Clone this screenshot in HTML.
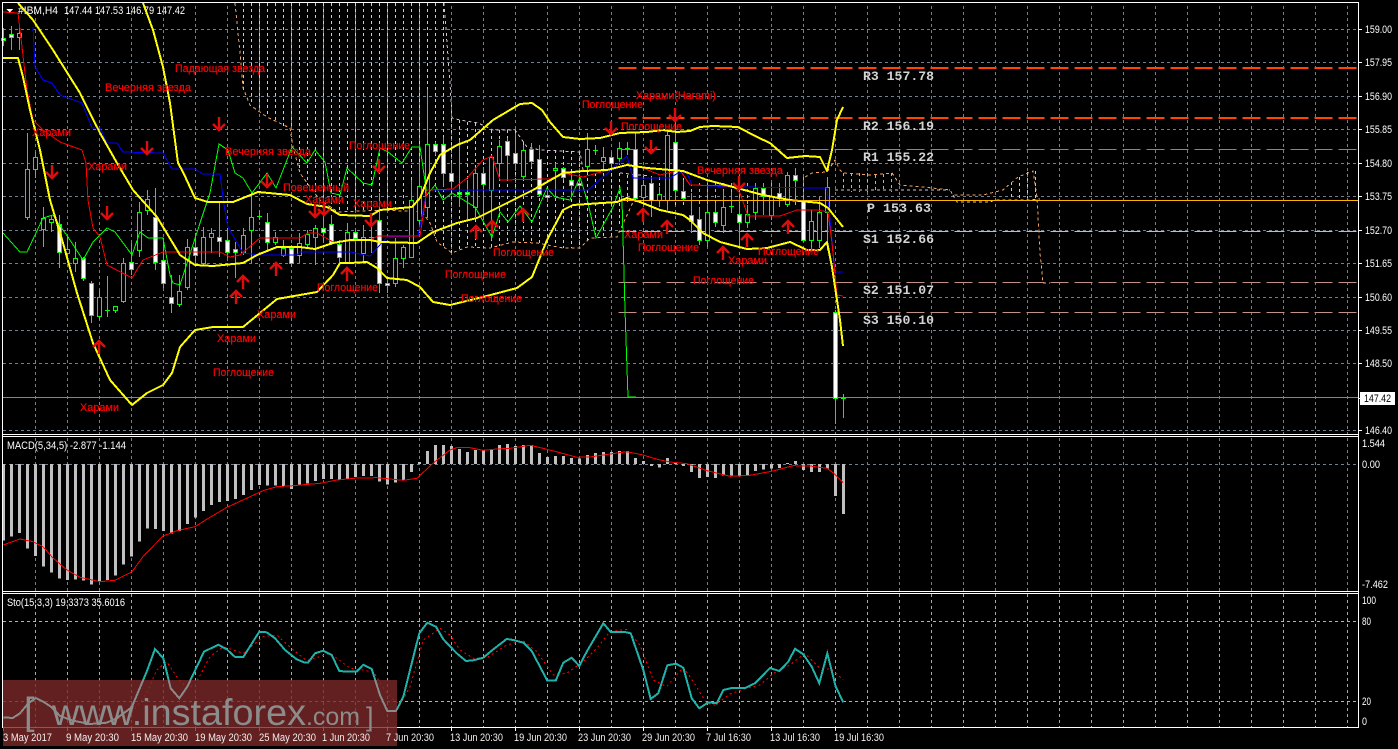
<!DOCTYPE html>
<html><head><meta charset="utf-8"><title>IBM,H4</title>
<style>
html,body{margin:0;padding:0;background:#000;width:1398px;height:749px;overflow:hidden}
svg{display:block}
text{font-family:"Liberation Sans",sans-serif;font-size:11px;fill:#fff}
.r text{font-size:11px;fill:#f00;stroke:#f00;stroke-width:.2px}
.m text{font-family:"Liberation Mono",monospace;font-size:13px;font-weight:bold;fill:#d4d4d4}
.t text{fill:#f4eeee}
.n{fill:none}
</style></head><body>
<svg xmlns="http://www.w3.org/2000/svg" width="1398" height="749" viewBox="0 0 1398 749" shape-rendering="crispEdges">
<defs>
<pattern id="gv" patternUnits="userSpaceOnUse" width="32" height="6"><rect x="3" y="0" width="1" height="3" fill="#708090"/></pattern>
<pattern id="gs" patternUnits="userSpaceOnUse" width="32" height="6"><rect x="3" y="0" width="1" height="3" fill="#a8a8a8"/></pattern>
<path id="da" class="n" stroke="#e00c0c" stroke-width="2.4" shape-rendering="geometricPrecision" d="M0 -7V6M-6 0L0 6L6 0"/>
<path id="ua" class="n" stroke="#e00c0c" stroke-width="2.4" shape-rendering="geometricPrecision" d="M0 7V-6M-6 0L0 -6L6 0"/>
<path id="sm" class="n" stroke-width="2" d="M3.3 717.3L12.7 718L20 713.3L28.3 703.3L36 698L43.3 701.7L51.7 707.3L60 716L73.3 720.7L90 724L106.7 722.7L116.7 718.3L131.7 707.3L146.7 671.7L155 649L163.3 658.3L170.7 688.3L179.3 698.3L187.3 686.7L204 651.7L218.3 644.7L226.7 649.3L235 657L243.3 657L259.3 631.7L266.7 632.3L275 638.3L285 650L296.7 659.3L304 662.3L308.3 662.3L315 653.3L323.3 650.7L331.7 655L339.3 671L348.3 671.7L356.7 671.7L363.3 664.7L371.7 669L380 695L387.3 711L396 711L403.3 696.7L419.3 633.3L427.3 622.7L436 626.7L443.3 639.3L456.7 653.3L466 661L473.3 660.3L483.3 657.7L493.3 649.3L506.7 639L513.3 640L523.3 642.7L531.7 651L540 666.7L547.3 680.7L555.7 680.7L563.3 662.7L571.7 657.7L579.3 666L586.7 651.7L603.3 623.3L610.7 632L625 632L630.7 633.3L643.3 670L650.7 699L658.3 693.3L667.3 665.3L676 663.7L683.3 667.7L691.7 698.3L699.3 708.3L708.3 702.3L716.7 703.3L723.3 690L731.7 688L745 688L755 683.3L770 668L779.3 671L788.3 661.7L795 648.7L803.3 654.3L811.7 666.7L819.3 683.3L827.3 653.3L835.7 686.7L843.3 702.3"/>
<clipPath id="wm"><rect x="3" y="680" width="394" height="66"/></clipPath>
</defs>
<rect width="1398" height="749" fill="#000"/>

<!-- main grid -->
<rect x="32" y="3" width="1320" height="431" fill="url(#gv)"/>
<g stroke="#708090" stroke-dasharray="3 3" class="n">
<path d="M3 29.5H1358M3 62.5H1358M3 96.5H1358M3 129.5H1358M3 163.5H1358M3 196.5H1358M3 230.5H1358M3 263.5H1358M3 297.5H1358M3 330.5H1358M3 363.5H1358M3 430.5H1358"/>
</g>

<!-- cloud -->
<path class="n" stroke="#d8c8c8" stroke-dasharray="3 3" d="M243.5 3V90M251.5 3V105M259.5 3V111M267.5 3V117M275.5 3V122M283.5 3V126M291.5 3V129M299.5 3V170M307.5 3V185M315.5 3V195M323.5 3V203M331.5 3V208M339.5 3V212M347.5 3V212M355.5 3V212M363.5 3V212M371.5 3V212M379.5 3V212M387.5 3V211M395.5 3V211M403.5 3V211M411.5 3V212M419.5 3V212M427.5 3V218M435.5 3V238M443.5 3V248M451.5 118V253M459.5 120V251M467.5 122V247M475.5 123V248M483.5 126V248M491.5 130V248M499.5 130V246M507.5 130V244M515.5 130V242M523.5 142V242M531.5 148V243M539.5 150V243M547.5 150V245M555.5 150V247M563.5 150V248M571.5 151V248M579.5 152V248M587.5 172V240M595.5 173V238M603.5 173V238M611.5 173V237M619.5 173V225M627.5 175V203M635.5 175V203M643.5 176V205M651.5 176V205M659.5 177V205M667.5 177V205M675.5 178V205M683.5 178V205M1011.5 182V198M1019.5 177V198M1027.5 172V198M1035.5 171V198"/>
<path class="n" stroke="#f4a460" stroke-dasharray="3 3" d="M691.5 183V205M699.5 183V205M707.5 183V205M715.5 183V205M723.5 183V205M731.5 183V205M739.5 183V205M747.5 183V205M755.5 183V205M763.5 183V205M771.5 183V205M779.5 183V205M787.5 180V205M795.5 178V205M803.5 177V205M843.5 173V190M851.5 173V192M859.5 173V192M867.5 173V192M875.5 175V192M883.5 174V192M891.5 173V192"/>
<path class="n" stroke="#f4a460" stroke-dasharray="3 3" d="M235 3L237 23L240 53L243 88L250 105L267 117L290 128L293 147L300 173L310 187L320 200L338 212L383 210L422 212L430 223L437 242L452 253L467 247L490 248L513 242L537 243L563 248L580 248L590 238L617 237L633 202L645 200M805 177L812 173L827 172L835 160L840 170L843 173L870 175L892 173L900 185L923 187L950 190L953 195L983 195L995 192L1003 190L1018 177L1033 171L1037 197L1040 253L1043 283L1050 283"/>
<path class="n" stroke="#d8bfd8" stroke-dasharray="3 3" d="M444 3L447 43L450 83L452 118L460 120L478 123L493 130L515 130L520 137L527 147L540 150L580 152L583 170M620 173L650 176M835 190L950 190M953 195L957 202L990 202L995 200L1030 200L1040 199"/>

<!-- levels -->
<g class="n" stroke-dasharray="18 6">
<path stroke="#ff4500" stroke-width="2" d="M618.5 68H1357M618.5 118H1357"/>
<path stroke="#ff5a30" d="M618.5 149.5H1357"/>
<path stroke="#c8b8b8" d="M618.5 231.5H1357"/>
<path stroke="#c49088" d="M618.5 282.5H1357M618.5 312.5H1357"/>
</g>
<path class="n" stroke="#778899" d="M3 397.5H1358"/>

<!-- candles -->
<path class="n" stroke="#0f0" d="M3.5 28V46M11.5 26V50M19.5 28V50M27.5 133V220M35.5 152V178M43.5 207V247M51.5 215V232M59.5 215V268M67.5 237V263M75.5 242V272M83.5 257V281M91.5 281V323M99.5 290V320M107.5 276V317M115.5 306V313M123.5 258V303M131.5 243V275M139.5 202V257M147.5 190V215M155.5 188V270M163.5 238V288M171.5 275V313M179.5 275V307M187.5 239V290M195.5 233V265M203.5 227V265M211.5 228V253M219.5 202V257M227.5 228V258M235.5 242V278M243.5 228V255M251.5 193V263M259.5 210V220M267.5 213V250M275.5 232V245M283.5 240V257M291.5 245V267M299.5 233V263M307.5 230V247M315.5 225V265M323.5 212V243M331.5 215V245M339.5 240V262M347.5 223V263M355.5 230V263M363.5 225V263M371.5 217V253M379.5 193V293M387.5 278V293M395.5 238V287M403.5 245V268M411.5 180V258M419.5 163V233M427.5 89V218M435.5 142V155M443.5 137V187M451.5 163V187M459.5 140V207M467.5 180V220M475.5 167V217M483.5 167V220M491.5 155V240M499.5 140V177M507.5 138V180M515.5 133V170M523.5 145V180M531.5 143V167M539.5 145V197M547.5 190V202M555.5 163V197M563.5 167V180M571.5 173V197M579.5 175V190M587.5 133V172M595.5 145V155M603.5 147V170M611.5 152V168M619.5 142V165M627.5 142V155M635.5 133V200M643.5 180V205M651.5 177V217M659.5 187V207M667.5 130V210M675.5 123V200M683.5 180V200M691.5 193V233M699.5 207V245M707.5 205V247M715.5 203V227M723.5 190V233M731.5 192V213M739.5 200V248M747.5 205V228M755.5 183V220M763.5 183V215M771.5 188V220M779.5 183V207M787.5 172V207M795.5 168V197M803.5 198V242M811.5 210V250M819.5 197V248M827.5 177V250M835.5 310V424M843.5 394V418M105 310.5H110M257 216.5H262M593 150.5H598M625 148.5H630M729 206.5H734M841 398.5H846M369 237.5H374"/>
<path fill="#000" stroke="#0f0" d="M17.5 33.5h4V37.5h-4zM25.5 169.5h4V217.5h-4zM33.5 157.5h4V169.5h-4zM41.5 218.5h4V229.5h-4zM49.5 219.5h4V222.5h-4zM65.5 249.5h4V253.5h-4zM73.5 258.5h4V263.5h-4zM97.5 297.5h4V316.5h-4zM113.5 306.5h4V310.5h-4zM121.5 263.5h4V301.5h-4zM137.5 212.5h4V250.5h-4zM145.5 199.5h4V210.5h-4zM177.5 291.5h4V304.5h-4zM185.5 247.5h4V287.5h-4zM201.5 237.5h4V263.5h-4zM209.5 233.5h4V237.5h-4zM241.5 235.5h4V252.5h-4zM249.5 217.5h4V230.5h-4zM273.5 237.5h4V242.5h-4zM281.5 248.5h4V255.5h-4zM297.5 243.5h4V255.5h-4zM305.5 234.5h4V244.5h-4zM313.5 228.5h4V237.5h-4zM345.5 232.5h4V262.5h-4zM361.5 237.5h4V253.5h-4zM393.5 258.5h4V283.5h-4zM401.5 247.5h4V258.5h-4zM409.5 200.5h4V257.5h-4zM417.5 186.5h4V220.5h-4zM425.5 144.5h4V207.5h-4zM473.5 173.5h4V207.5h-4zM489.5 157.5h4V190.5h-4zM497.5 146.5h4V163.5h-4zM521.5 150.5h4V176.5h-4zM553.5 168.5h4V170.5h-4zM585.5 149.5h4V166.5h-4zM601.5 157.5h4V161.5h-4zM617.5 148.5h4V158.5h-4zM641.5 185.5h4V197.5h-4zM657.5 194.5h4V200.5h-4zM665.5 135.5h4V200.5h-4zM705.5 212.5h4V240.5h-4zM721.5 207.5h4V225.5h-4zM745.5 214.5h4V222.5h-4zM753.5 188.5h4V212.5h-4zM769.5 196.5h4V215.5h-4zM785.5 175.5h4V204.5h-4zM809.5 221.5h4V240.5h-4zM817.5 212.5h4V240.5h-4zM825.5 187.5h4V212.5h-4z"/>
<path fill="#fff" stroke="#0f0" d="M1.5 38.5h4V40.5h-4zM9.5 34.5h4V37.5h-4zM57.5 224.5h4V252.5h-4zM81.5 258.5h4V278.5h-4zM89.5 283.5h4V315.5h-4zM129.5 262.5h4V269.5h-4zM153.5 217.5h4V262.5h-4zM161.5 260.5h4V283.5h-4zM169.5 297.5h4V303.5h-4zM193.5 247.5h4V255.5h-4zM217.5 237.5h4V241.5h-4zM225.5 240.5h4V252.5h-4zM233.5 249.5h4V252.5h-4zM265.5 222.5h4V242.5h-4zM289.5 248.5h4V263.5h-4zM321.5 228.5h4V232.5h-4zM329.5 224.5h4V243.5h-4zM337.5 244.5h4V257.5h-4zM353.5 232.5h4V238.5h-4zM377.5 220.5h4V283.5h-4zM385.5 283.5h4V285.5h-4zM433.5 144.5h4V151.5h-4zM441.5 144.5h4V173.5h-4zM449.5 173.5h4V181.5h-4zM457.5 192.5h4V194.5h-4zM465.5 192.5h4V194.5h-4zM481.5 173.5h4V184.5h-4zM505.5 141.5h4V155.5h-4zM513.5 153.5h4V163.5h-4zM529.5 149.5h4V161.5h-4zM537.5 159.5h4V194.5h-4zM545.5 195.5h4V197.5h-4zM561.5 168.5h4V177.5h-4zM569.5 180.5h4V185.5h-4zM577.5 183.5h4V185.5h-4zM609.5 157.5h4V163.5h-4zM633.5 149.5h4V198.5h-4zM649.5 183.5h4V200.5h-4zM673.5 142.5h4V190.5h-4zM681.5 191.5h4V198.5h-4zM689.5 215.5h4V221.5h-4zM697.5 219.5h4V240.5h-4zM713.5 212.5h4V222.5h-4zM737.5 214.5h4V222.5h-4zM761.5 188.5h4V196.5h-4zM777.5 193.5h4V198.5h-4zM793.5 175.5h4V180.5h-4zM801.5 200.5h4V240.5h-4zM833.5 312.5h4V398.5h-4z"/>

<!-- green chikou -->
<path class="n" stroke="#0f0" d="M3 233L20 252L27 252L43 218L53 215L58 223L68 237L83 260L93 242L107 228L115 232L132 255L140 232L148 238L163 238L170 275L173 283L180 285L200 223L210 193L219 144L228 150L235 173L243 178L252 193L267 173L276 188L292 147L307 163L315 150L325 162L331 193L340 195L347 168L363 183L372 185L380 148L388 152L402 163L412 147L420 147L427 195L435 185L443 200L452 193L475 207L492 237L500 212L508 222L520 206L532 222L547 188L555 197L570 200L580 177L588 203L596 238L613 207L620 188L622 200L625 310L628 397H636"/>
<!-- blue -->
<path class="n" stroke="#00f" d="M33 27L35 67L43 80L52 83L60 95L82 103L92 128L100 128L107 143L117 143L123 152L163 153L172 169L195 169L203 174L220 174L224 205L228 227L243 253L260 255L297 255L300 252L350 252L370 256L387 237L418 236L427 190H588L603 177L627 156L633 178L670 178L678 173L687 173L692 185L733 187L827 188L830 220L835 272L843 272"/>
<!-- red -->
<path class="n" stroke="#f00" d="M3 12L18 13L22 47L27 90L33 120L43 130L60 142L82 150L86 163L88 200L93 228L100 237L107 265L132 278L143 260L163 252L220 252L230 257L240 255L260 238L300 238L308 233L317 233L333 242L370 240L378 236L420 236L427 190L453 189L467 178L483 160L492 156L500 180L550 179L563 173L583 177L627 165L643 168L660 175L680 170L690 185L733 186L740 193L748 216L780 216L797 210L817 210L828 212L832 243L837 295L843 296"/>

<!-- text before yellow so the band crosses it -->
<text x="18" y="14" textLength="40" lengthAdjust="spacingAndGlyphs">#IBM,H4</text>
<text x="64" y="14" textLength="121" lengthAdjust="spacingAndGlyphs">147.44 147.53 146.79 147.42</text>
<path d="M6.5 9H13L9.75 12.5Z" fill="#fff"/>

<!-- yellow bands -->
<g class="n" stroke="#ff0" stroke-width="2" stroke-linejoin="round">
<path d="M143 3L153 30L163 67L170 103L178 163L183 172L195 198L208 202L233 202L258 192L290 195L307 204L327 207L340 215L370 216L380 210L412 207L420 198L430 173L440 155L457 145L470 140L493 120L520 104L532 103L542 110L550 122L563 137L580 139L600 138L620 133L647 132L663 130L677 132L690 131L700 127L713 126L738 127L757 137L770 143L787 158L805 156L820 157L827 171L832 150L837 120L843 107"/>
<path d="M18 3L33 20L53 50L80 93L100 133L117 163L133 190L157 217L180 255L195 265L213 266L243 263L257 255L277 247L300 247L315 249L333 243L350 240L370 240L380 242L417 243L433 232L457 223L477 218L507 203L533 190L563 173L583 171L607 170L627 165L647 168L683 171L707 180L733 187L763 195L790 200L820 203L828 208L843 227"/>
<path d="M3 58L18 58L23 77L30 110L40 150L50 200L63 243L77 293L93 343L110 380L132 405L147 393L163 385L172 373L180 347L195 330L213 327L243 327L277 299L317 292L333 275L340 263L350 263L367 262L377 268L387 278L407 280L420 287L433 302L450 305L483 297L517 288L532 277L547 240L563 210L573 205L617 202L627 198L640 202L660 210L683 215L690 220L703 233L720 242L747 249L767 248L790 242L807 250L820 250L827 242L832 267L837 300L840 320L843 346"/>
</g>
<path class="n" stroke="#ffb400" d="M622 200.5H1358"/>

<!-- arrows -->
<use href="#da" x="219" y="124"/><use href="#da" x="147" y="148"/><use href="#da" x="52" y="172"/><use href="#da" x="107" y="213"/><use href="#da" x="267" y="181"/><use href="#da" x="315" y="211"/><use href="#da" x="324" y="209"/><use href="#da" x="371" y="220"/><use href="#da" x="379" y="166"/><use href="#da" x="611" y="128"/><use href="#da" x="651" y="147"/><use href="#da" x="675" y="115"/><use href="#da" x="739" y="183"/>
<use href="#ua" x="99" y="347"/><use href="#ua" x="236" y="297"/><use href="#ua" x="243" y="282"/><use href="#ua" x="276" y="269"/><use href="#ua" x="347" y="274"/><use href="#ua" x="476" y="232"/><use href="#ua" x="492" y="227"/><use href="#ua" x="523" y="215"/><use href="#ua" x="643" y="215"/><use href="#ua" x="667" y="227"/><use href="#ua" x="723" y="253"/><use href="#ua" x="747" y="240"/><use href="#ua" x="788" y="227"/>

<!-- pattern labels -->
<g class="r">
<text x="175" y="72" textLength="90" lengthAdjust="spacingAndGlyphs">Падающая звезда</text>
<text x="105" y="91" textLength="86" lengthAdjust="spacingAndGlyphs">Вечерняя звезда</text>
<text x="32" y="136" textLength="39" lengthAdjust="spacingAndGlyphs">Харами</text>
<text x="88" y="170" textLength="39" lengthAdjust="spacingAndGlyphs">Харами</text>
<text x="225" y="155" textLength="86" lengthAdjust="spacingAndGlyphs">Вечерняя звезда</text>
<text x="283" y="191" textLength="66" lengthAdjust="spacingAndGlyphs">Повешенный</text>
<text x="305" y="203" textLength="39" lengthAdjust="spacingAndGlyphs">Харами</text>
<text x="353" y="207" textLength="39" lengthAdjust="spacingAndGlyphs">Харами</text>
<text x="349" y="149" textLength="61" lengthAdjust="spacingAndGlyphs">Поглощение</text>
<text x="493" y="256" textLength="61" lengthAdjust="spacingAndGlyphs">Поглощение</text>
<text x="445" y="278" textLength="61" lengthAdjust="spacingAndGlyphs">Поглощение</text>
<text x="461" y="302" textLength="61" lengthAdjust="spacingAndGlyphs">Поглощение</text>
<text x="582" y="108" textLength="61" lengthAdjust="spacingAndGlyphs">Поглощение</text>
<text x="636" y="99" textLength="80" lengthAdjust="spacingAndGlyphs">Харами(Harami)</text>
<text x="621" y="130" textLength="61" lengthAdjust="spacingAndGlyphs">Поглощение</text>
<text x="624" y="238" textLength="39" lengthAdjust="spacingAndGlyphs">Харами</text>
<text x="638" y="251" textLength="61" lengthAdjust="spacingAndGlyphs">Поглощение</text>
<text x="317" y="291" textLength="61" lengthAdjust="spacingAndGlyphs">Поглощение</text>
<text x="697" y="174" textLength="86" lengthAdjust="spacingAndGlyphs">Вечерняя звезда</text>
<text x="758" y="255" textLength="61" lengthAdjust="spacingAndGlyphs">Поглощение</text>
<text x="728" y="264" textLength="39" lengthAdjust="spacingAndGlyphs">Харами</text>
<text x="693" y="284" textLength="61" lengthAdjust="spacingAndGlyphs">Поглощение</text>
<text x="257" y="318" textLength="39" lengthAdjust="spacingAndGlyphs">Харами</text>
<text x="217" y="342" textLength="39" lengthAdjust="spacingAndGlyphs">Харами</text>
<text x="213" y="376" textLength="61" lengthAdjust="spacingAndGlyphs">Поглощение</text>
<text x="80" y="411" textLength="39" lengthAdjust="spacingAndGlyphs">Харами</text>
</g>

<!-- pivot labels -->
<g class="m">
<text x="863" y="80" textLength="71" lengthAdjust="spacingAndGlyphs">R3 157.78</text>
<text x="863" y="130" textLength="71" lengthAdjust="spacingAndGlyphs">R2 156.19</text>
<text x="863" y="161" textLength="71" lengthAdjust="spacingAndGlyphs">R1 155.22</text>
<text x="867" y="212" textLength="64" lengthAdjust="spacingAndGlyphs">P 153.63</text>
<text x="863" y="243" textLength="71" lengthAdjust="spacingAndGlyphs">S1 152.66</text>
<text x="863" y="294" textLength="71" lengthAdjust="spacingAndGlyphs">S2 151.07</text>
<text x="863" y="324" textLength="71" lengthAdjust="spacingAndGlyphs">S3 150.10</text>
</g>

<!-- MACD pane -->
<rect x="32" y="437" width="1320" height="154" fill="url(#gv)"/>
<path class="n" stroke="#708090" stroke-dasharray="3 3" d="M3 464.5H1358"/>
<path class="n" stroke="#c0c0c0" stroke-width="3" d="M3.5 464V540.7M11.5 464V536.7M19.5 464V533M27.5 464V548.7M35.5 464V556M43.5 464V566.7M51.5 464V572.7M59.5 464V578.7M67.5 464V580M75.5 464V579.7M83.5 464V580.7M91.5 464V584.7M99.5 464V581.3M107.5 464V580M115.5 464V575.7M123.5 464V564.7M131.5 464V556.7M139.5 464V541.7M147.5 464V528.7M155.5 464V529M163.5 464V531M171.5 464V533.7M179.5 464V531M187.5 464V524M195.5 464V517.7M203.5 464V511M211.5 464V505M219.5 464V502M227.5 464V501M235.5 464V499M243.5 464V495M251.5 464V490M259.5 464V485M267.5 464V485.7M275.5 464V485.3M283.5 464V486M291.5 464V489M299.5 464V485M307.5 464V483.3M315.5 464V481M323.5 464V479M331.5 464V479M339.5 464V480M347.5 464V479M355.5 464V477M363.5 464V476M371.5 464V476M379.5 464V481.7M387.5 464V484.7M395.5 464V482.7M403.5 464V480M411.5 464V472M419.5 464V462M427.5 464V451M435.5 464V445M443.5 464V445M451.5 464V446M459.5 464V449M467.5 464V452M475.5 464V450M483.5 464V450M491.5 464V449.3M499.5 464V445M507.5 464V444M515.5 464V446M523.5 464V445M531.5 464V445M539.5 464V453M547.5 464V457M555.5 464V456M563.5 464V456M571.5 464V458M579.5 464V458.7M587.5 464V455M595.5 464V453M603.5 464V452M611.5 464V452M619.5 464V451M627.5 464V451M635.5 464V458M643.5 464V461M651.5 464V466M659.5 464V467.3M667.5 464V458M675.5 464V462.7M683.5 464V466M691.5 464V472M699.5 464V478M707.5 464V477M715.5 464V478M723.5 464V475.3M731.5 464V475.3M739.5 464V475.3M747.5 464V475.3M755.5 464V471M763.5 464V469.3M771.5 464V468.3M779.5 464V468M787.5 464V463M795.5 464V461M803.5 464V470M811.5 464V472M819.5 464V472M827.5 464V468.3M835.5 464V496M843.5 464V514"/>
<path class="n" stroke="#f00" d="M3.3 545L20 539L33 541.7L43 546.7L53 558L67 570L80 577.3L100 581.7L115 580.3L132 571.7L143 556.7L163 536L177 530.7L195 526.7L210 517.3L227 507.3L243 500L263 490.7L277 486.7L293 485.7L320 483.3L337 480L357 478L377 477.7L403 480.3L417 478.3L433 463.3L440 457.7L450 450L458 447.3L470 447.7L483 450.3L497 449L510 448.3L530 445.3L543 448.3L560 452.7L577 457.3L590 457L610 454L627 451.7L643 455L657 459.3L670 462L687 463.7L707 470.7L730 476.3L750 475.3L773 471L793 465.7L810 466L827 468.3L835 474.3L843 482.7"/>
<text x="7" y="449" textLength="119" lengthAdjust="spacingAndGlyphs">MACD(5,34,5) -2.877 -1.144</text>

<!-- Stochastic pane -->
<rect x="32" y="594" width="1320" height="133" fill="url(#gs)"/>
<path class="n" stroke="#b4b4b4" stroke-dasharray="3 3" d="M3 621.5H1358M3 701.5H1358"/>
<path class="n" stroke="#f00" stroke-dasharray="2 3" d="M3.3 718.3L16.7 716.7L28.3 710L40 701.7L53.3 705L66.7 715L86.7 721.7L110 721.7L130 715L146.7 693.3L156.7 670L166.7 661.7L176.7 676.7L186.7 688.3L195 685L210 656.7L223.3 646.7L243.3 653.3L263.3 636.7L276.7 635L293.3 650L306.7 660.7L330 653.3L350 668.3L373.3 671.7L386.7 693.3L400 705L410 686.7L423.3 640L440 628.3L450 635L460 650L473.3 658.3L486.7 657.7L506.7 645L523.3 640.7L536.7 651.7L553.3 675L566.7 673.3L583.3 661.7L596.7 648.3L610 631.7L626.7 629.3L640 645L653.3 680L666.7 686.7L683.3 667.3L693.3 681.7L706.7 703.3L715 705L730 694L745 688.7L760 685L773.3 673.3L790 665L805 653.3L820 668.3L831.7 669.3L843.3 680"/>
<use href="#sm" stroke="#20b2aa"/>
<text x="7" y="606" textLength="118" lengthAdjust="spacingAndGlyphs">Sto(15,3,3) 19.3373 35.6016</text>

<!-- frame -->
<path class="n" stroke="#fff" d="M2.5 2.5H1358.5V727.5H2.5ZM2.5 434.5H1358.5M2.5 436.5H1358.5M2.5 591.5H1358.5M2.5 593.5H1358.5"/>
<path class="n" stroke="#fff" d="M1359 29.5h3M1359 62.5h3M1359 96.5h3M1359 129.5h3M1359 163.5h3M1359 196.5h3M1359 230.5h3M1359 263.5h3M1359 297.5h3M1359 330.5h3M1359 363.5h3M1359 430.5h3M3.5 728v3M67.5 728v3M131.5 728v3M195.5 728v3M259.5 728v3M323.5 728v3M387.5 728v3M451.5 728v3M515.5 728v3M579.5 728v3M643.5 728v3M707.5 728v3M771.5 728v3M835.5 728v3"/>

<!-- watermark -->
<rect x="3" y="680" width="394" height="66" fill="#7c2828" fill-opacity=".8"/>
<g clip-path="url(#wm)"><use href="#sm" stroke="#8a8a8a"/></g>
<g shape-rendering="auto">
<text x="24" y="724" style="font-size:38px;fill:#8c8c8c">[</text>
<text x="52" y="725" textLength="254" lengthAdjust="spacingAndGlyphs" style="font-size:37.5px;fill:#8c8c8c">www.instaforex</text>
<text x="306" y="725" textLength="54" lengthAdjust="spacingAndGlyphs" style="font-size:25px;fill:#8c8c8c">.com</text>
<text x="366" y="726" style="font-size:27px;fill:#8c8c8c">]</text>
</g>

<!-- right axis -->
<g>
<text x="1365" y="33" textLength="27" lengthAdjust="spacingAndGlyphs">159.00</text>
<text x="1365" y="66" textLength="27" lengthAdjust="spacingAndGlyphs">157.95</text>
<text x="1365" y="100" textLength="27" lengthAdjust="spacingAndGlyphs">156.90</text>
<text x="1365" y="133" textLength="27" lengthAdjust="spacingAndGlyphs">155.85</text>
<text x="1365" y="167" textLength="27" lengthAdjust="spacingAndGlyphs">154.80</text>
<text x="1365" y="200" textLength="27" lengthAdjust="spacingAndGlyphs">153.75</text>
<text x="1365" y="234" textLength="27" lengthAdjust="spacingAndGlyphs">152.70</text>
<text x="1365" y="267" textLength="27" lengthAdjust="spacingAndGlyphs">151.65</text>
<text x="1365" y="301" textLength="27" lengthAdjust="spacingAndGlyphs">150.60</text>
<text x="1365" y="334" textLength="27" lengthAdjust="spacingAndGlyphs">149.55</text>
<text x="1365" y="367" textLength="27" lengthAdjust="spacingAndGlyphs">148.50</text>
<text x="1365" y="434" textLength="27" lengthAdjust="spacingAndGlyphs">146.40</text>
<rect x="1360" y="392" width="35" height="13" fill="#fff"/>
<path class="n" stroke="#fff" d="M1358 398.5h3"/>
<text x="1364" y="402" textLength="27" lengthAdjust="spacingAndGlyphs" style="fill:#000">147.42</text>
<text x="1362" y="447" textLength="23" lengthAdjust="spacingAndGlyphs">1.544</text>
<text x="1362" y="468" textLength="18" lengthAdjust="spacingAndGlyphs">0.00</text>
<text x="1362" y="588" textLength="26" lengthAdjust="spacingAndGlyphs">-7.462</text>
<text x="1362" y="604" textLength="14" lengthAdjust="spacingAndGlyphs">100</text>
<text x="1362" y="625" textLength="9" lengthAdjust="spacingAndGlyphs">80</text>
<text x="1362" y="705" textLength="9" lengthAdjust="spacingAndGlyphs">20</text>
<text x="1362" y="725" textLength="5" lengthAdjust="spacingAndGlyphs">0</text>
</g>

<!-- time axis -->
<g class="t">
<text x="3" y="741" textLength="49" lengthAdjust="spacingAndGlyphs">3 May 2017</text>
<text x="66" y="741" textLength="53" lengthAdjust="spacingAndGlyphs">9 May 20:30</text>
<text x="131" y="741" textLength="57" lengthAdjust="spacingAndGlyphs">15 May 20:30</text>
<text x="195" y="741" textLength="57" lengthAdjust="spacingAndGlyphs">19 May 20:30</text>
<text x="259" y="741" textLength="57" lengthAdjust="spacingAndGlyphs">25 May 20:30</text>
<text x="322" y="741" textLength="48" lengthAdjust="spacingAndGlyphs">1 Jun 20:30</text>
<text x="386" y="741" textLength="48" lengthAdjust="spacingAndGlyphs">7 Jun 20:30</text>
<text x="450" y="741" textLength="53" lengthAdjust="spacingAndGlyphs">13 Jun 20:30</text>
<text x="514" y="741" textLength="53" lengthAdjust="spacingAndGlyphs">19 Jun 20:30</text>
<text x="578" y="741" textLength="53" lengthAdjust="spacingAndGlyphs">23 Jun 20:30</text>
<text x="642" y="741" textLength="53" lengthAdjust="spacingAndGlyphs">29 Jun 20:30</text>
<text x="706" y="741" textLength="45" lengthAdjust="spacingAndGlyphs">7 Jul 16:30</text>
<text x="770" y="741" textLength="50" lengthAdjust="spacingAndGlyphs">13 Jul 16:30</text>
<text x="834" y="741" textLength="50" lengthAdjust="spacingAndGlyphs">19 Jul 16:30</text>
</g>
</svg>
</body></html>
